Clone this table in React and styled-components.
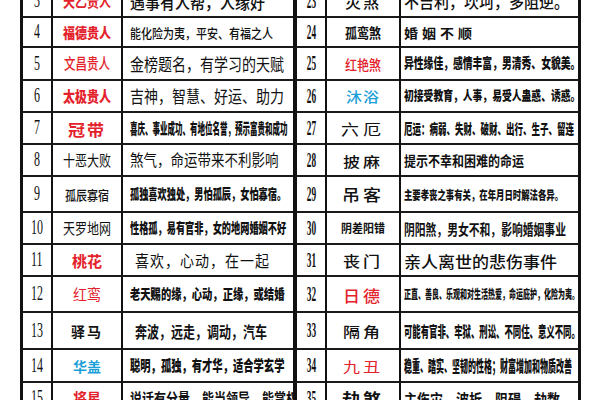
import React from "react";
import styled, { createGlobalStyle } from "styled-components";

const GlobalStyle = createGlobalStyle`
  html, body {
    margin: 0;
    padding: 0;
    background: #ffffff;
  }
  body {
    font-family: "Noto Sans CJK SC", "Noto Sans", sans-serif;
  }
`;

const Page = styled.div`
  width: 600px;
  height: 400px;
  overflow: hidden;
  background: #ffffff;
`;

const Table = styled.div`
  display: grid;
  grid-template-columns: 31px 70px 172px 32px 74px 182px;
  grid-template-rows: 32px 30px 33px 32px 32px 32px 36px 32px 32px 36px 37px 33px 32px;
  margin: -14px 0 0 20px;
`;

const Cell = styled.div`
  display: flex;
  align-items: center;
  justify-content: ${(p) => (p.$left ? "flex-start" : "center")};
  padding-left: ${(p) => p.$pad || 0}px;
  border-left: ${(p) => p.$bl || 2}px solid #111;
  border-right: ${(p) => (p.$last ? "3px solid #111" : "none")};
  border-bottom: 2px solid #1a1a1a;
  overflow: hidden;
  background: #ffffff;
`;

const Txt = styled.span`
  display: inline-block;
  white-space: nowrap;
  line-height: 1;
  font-family: ${(p) =>
    p.$num ? '"Liberation Serif", serif' : '"Noto Sans CJK SC", sans-serif'};
  font-size: ${(p) => p.$w}px;
  font-weight: ${(p) => p.$fw || 400};
  letter-spacing: ${(p) => p.$ls || 0}px;
  color: ${(p) => p.$c || "#111"};
  transform: scale(${(p) => p.$sx || 1}, ${(p) => p.$h / p.$w});
  transform-origin: ${(p) => (p.$left ? "left center" : "center")};
`;

const RED = "#e3222b";
const CYAN = "#1c9fd8";

// [num, name, nameStyle, desc, descStyle]
const leftRows = [
  [3, "天乙贵人", { c: RED, w: 12, h: 15, fw: 700 }, "遇事有人帮，人缘好", { w: 15, h: 17, fw: 500 }],
  [4, "福德贵人", { c: RED, w: 12, h: 14, fw: 900 }, "能化险为夷，平安、有福之人", { w: 11, h: 13, fw: 500 }],
  [5, "文昌贵人", { c: RED, w: 11.5, h: 15, fw: 500 }, "金榜题名，有学习的天赋", { w: 14, h: 17, fw: 400 }],
  [6, "太极贵人", { c: RED, w: 12, h: 15, fw: 900 }, "吉神，智慧、好运、助力", { w: 14, h: 17, fw: 400 }],
  [7, "冠带", { c: RED, w: 17, h: 16, fw: 700, ls: 2 }, "喜庆、事业成功、有地位名誉，预示富贵和成功", { w: 7.5, h: 15, fw: 900 }],
  [8, "十恶大败", { w: 12, h: 15, fw: 400 }, "煞气，命运带来不利影响", { w: 13.5, h: 16, fw: 400 }],
  [9, "孤辰寡宿", { w: 11, h: 13, fw: 500 }, "孤独喜欢独处，男怕孤辰，女怕寡宿。", { w: 9.2, h: 14, fw: 900 }],
  [10, "天罗地网", { w: 12, h: 15, fw: 400 }, "性格孤，易有官非，女的地网婚姻不好", { w: 9.2, h: 14, fw: 900 }],
  [11, "桃花", { c: RED, w: 15, h: 15, fw: 700 }, "喜欢，心动，在一起", { w: 14, h: 16, fw: 400, ls: 1 }],
  [12, "红鸾", { c: RED, w: 14, h: 15, fw: 400 }, "老天赐的缘，心动，正缘，或结婚", { w: 10.3, h: 14, fw: 900 }],
  [13, "驿马", { w: 14, h: 14, fw: 700, ls: 2 }, "奔波，远走，调动，汽车", { w: 12, h: 16, fw: 700 }],
  [14, "华盖", { c: CYAN, w: 14, h: 14, fw: 700 }, "聪明，孤独，有才华，适合学玄学", { w: 10.3, h: 15, fw: 900 }],
  [15, "将星", { c: RED, w: 14, h: 15, fw: 700 }, "说话有分量，能当领导，能掌权", { w: 12, h: 15, fw: 700 }],
];

const rightRows = [
  [23, "灾煞", { w: 16, h: 16, fw: 500, ls: 2 }, "不吉利，坎坷，多阻逆。", { w: 15, h: 16, fw: 500 }],
  [24, "孤鸾煞", { w: 12, h: 14, fw: 700 }, "婚姻不顺", { w: 14, h: 13, fw: 700, ls: 4 }],
  [25, "红艳煞", { c: RED, w: 12, h: 14, fw: 500 }, "异性缘佳，感情丰富，男清秀、女貌美。", { w: 9.8, h: 14, fw: 900 }],
  [26, "沐浴", { c: CYAN, w: 16, h: 14, fw: 500, ls: 1 }, "初接受教育，人事，易受人蛊惑、诱惑。", { w: 9.8, h: 13, fw: 900 }],
  [27, "六厄", { w: 18, h: 15, fw: 400, ls: 4 }, "厄运：病弱、失财、破财、出行、生子、留连", { w: 8.5, h: 14, fw: 900 }],
  [28, "披麻", { w: 17, h: 14, fw: 500, ls: 3 }, "提示不幸和困难的命运", { w: 12, h: 14, fw: 700 }],
  [29, "吊客", { w: 18, h: 16, fw: 500, ls: 3 }, "主要孝丧之事有关，在年月日时解法各异。", { w: 8.4, h: 12, fw: 900 }],
  [30, "阴差阳错", { w: 11, h: 12, fw: 700 }, "阴阳煞，男女不和，影响婚姻事业", { w: 10.8, h: 15, fw: 700 }],
  [31, "丧门", { w: 17, h: 15, fw: 500, ls: 3 }, "亲人离世的悲伤事件", { w: 17, h: 16, fw: 500 }],
  [32, "日德", { c: RED, w: 17, h: 16, fw: 500, ls: 3 }, "正直、善良、乐观和对生活热爱，命运庇护，化险为夷。", { w: 7, h: 12, fw: 900 }],
  [33, "隔角", { w: 17, h: 14, fw: 500, ls: 3 }, "可能有官非、牢狱、刑讼、不同住、意义不同。", { w: 8.4, h: 15, fw: 900 }],
  [34, "九丑", { c: RED, w: 17, h: 14, fw: 400, ls: 3 }, "稳重、踏实、坚韧的性格；财富增加和物质改善", { w: 8, h: 16, fw: 900 }],
  [35, "劫煞", { w: 18, h: 16, fw: 700, ls: 3 }, "主伤灾、波折、阻碍、劫数", { w: 13, h: 15, fw: 700 }],
];

const S = (s) => ({ $w: s.w, $h: s.h, $fw: s.fw, $c: s.c, $ls: s.ls, $sx: s.sx });

const App = () => (
  <Page>
    <GlobalStyle />
    <Table>
      {leftRows.map((l, i) => {
        const r = rightRows[i];
        return (
          <React.Fragment key={l[0]}>
            <Cell $bl={3}>
              <Txt $num $w={16} $h={20} $sx={0.75}>
                {l[0]}
              </Txt>
            </Cell>
            <Cell>
              <Txt {...S(l[2])}>{l[1]}</Txt>
            </Cell>
            <Cell $left $pad={l[0] === 11 || l[0] === 13 ? 12 : 7}>
              <Txt $left {...S(l[4])}>
                {l[3]}
              </Txt>
            </Cell>
            <Cell $bl={4}>
              <Txt $num $w={15} $h={21} $fw={700} $sx={0.62}>
                {r[0]}
              </Txt>
            </Cell>
            <Cell>
              <Txt {...S(r[2])}>{r[1]}</Txt>
            </Cell>
            <Cell $left $last $pad={3}>
              <Txt $left {...S(r[4])}>
                {r[3]}
              </Txt>
            </Cell>
          </React.Fragment>
        );
      })}
    </Table>
  </Page>
);

export default App;
